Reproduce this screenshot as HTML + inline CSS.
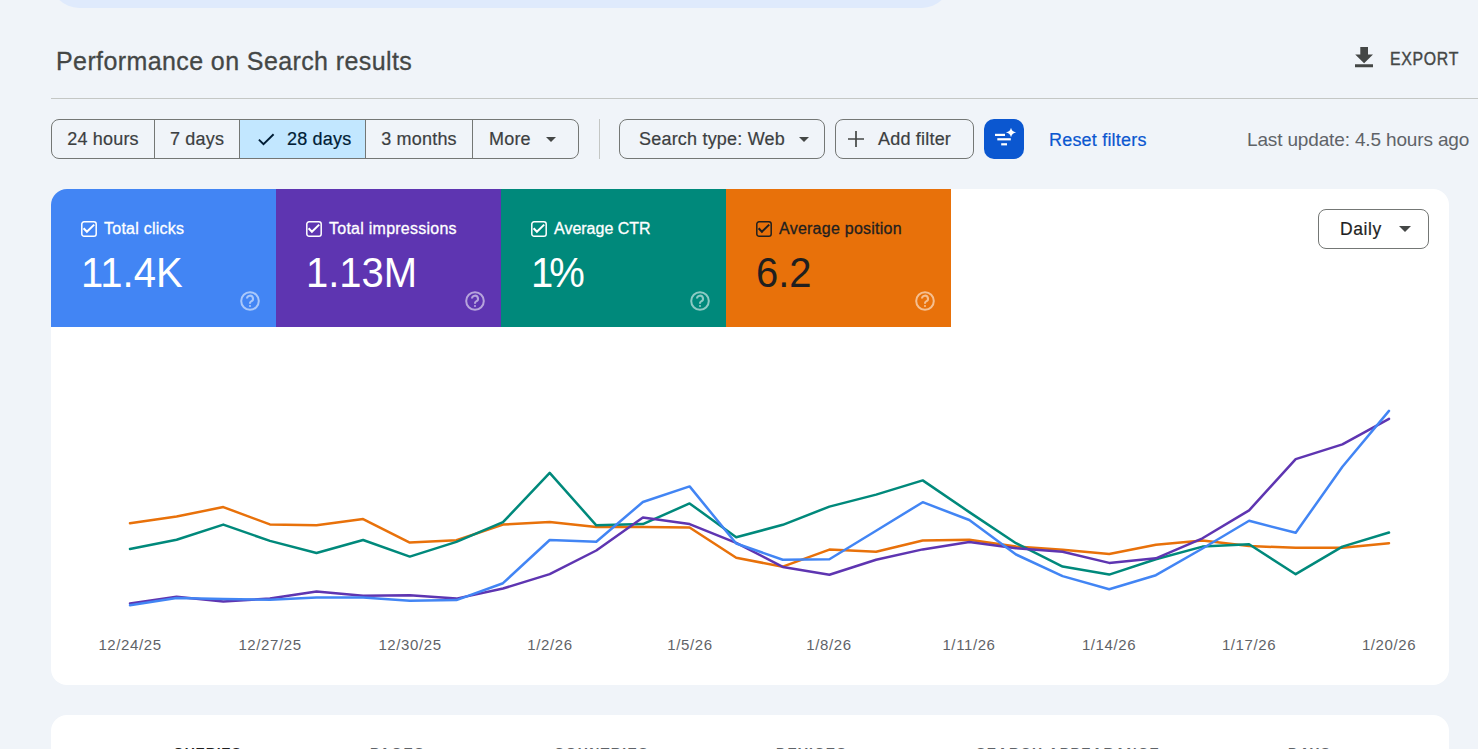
<!DOCTYPE html>
<html><head><meta charset="utf-8">
<style>
*{box-sizing:border-box;margin:0;padding:0}
html,body{width:1478px;height:749px;overflow:hidden;background:#f0f4f9;font-family:"Liberation Sans",sans-serif;color:#1f1f1f}
.abs{position:absolute}
#topbox{left:51px;top:-40px;width:899px;height:48px;background:#dfeafc;border-radius:0 0 28px 28px}
#title{left:56px;top:47px;font-size:25px;letter-spacing:0.4px;color:#444746;white-space:nowrap;-webkit-text-stroke:0.3px #444746}
#export{left:1355px;top:46px;height:24px}
#export span{position:absolute;left:35px;top:3px;font-size:18px;color:#444746;letter-spacing:0.8px;-webkit-text-stroke:0.4px #444746;transform:scaleX(0.88);transform-origin:0 0}
#hr{left:51px;top:98px;width:1427px;height:1px;background:#c4c7c5}
.seg{left:51px;top:119px;width:528px;height:40px;border:1px solid #747775;border-radius:8px;overflow:hidden}
.seg div{position:absolute;top:0;height:38px;border-left:1px solid #747775;font-size:18px;letter-spacing:0.2px;color:#3c3f41;-webkit-text-stroke:0.2px currentColor;line-height:38px;text-align:center}
.btn{position:absolute;top:119px;height:40px;border:1px solid #747775;border-radius:8px;font-size:18px;letter-spacing:0.2px;line-height:38px;color:#3c3f41;white-space:nowrap;-webkit-text-stroke:0.2px currentColor}
.caret{position:absolute;width:0;height:0;border-left:5px solid transparent;border-right:5px solid transparent;border-top:5px solid #444746}
#card{left:51px;top:189px;width:1398px;height:496px;background:#fff;border-radius:16px;overflow:hidden}
.m{position:absolute;top:0;width:225px;height:138px;color:#fff}
.m .lbl{position:absolute;left:53px;top:31px;font-size:16px;letter-spacing:0.25px;white-space:nowrap;-webkit-text-stroke:0.3px currentColor}
.m .cb{position:absolute;left:30px;top:32px;width:15px;height:15px;border:1.6px solid #fff;border-radius:2px}
.m .val{position:absolute;left:30px;top:62px;font-size:40px;white-space:nowrap;transform:scaleY(1.06);transform-origin:0 36px}
.m svg.h{position:absolute;left:188px;top:101px}
#daily{left:1318px;top:209px;width:111px;height:40px;border:1px solid #747775;border-radius:8px}
.ax{position:absolute;top:636px;font-size:15px;letter-spacing:0.6px;color:#5f6368;width:100px;text-align:center;margin-left:-50px}
#card2{left:51px;top:715px;width:1398px;height:100px;background:#fff;border-radius:16px}
.tab{position:absolute;top:745px;font-size:14px;font-weight:bold;color:#5f6368;white-space:nowrap;letter-spacing:1.4px}
</style></head><body>
<div id="topbox" class="abs"></div>
<div id="title" class="abs">Performance on Search results</div>
<div id="export" class="abs">
<svg width="18" height="22" style="position:absolute;left:0;top:0" viewBox="0 0 18 22"><path d="M5.3 1h7.7v7.5h5l-8.9 8.7L0.2 8.5h5.1z M0 18.3h18v2.9H0z" fill="#444746"/></svg>
<span>EXPORT</span></div>
<div id="hr" class="abs"></div>

<div class="seg abs">
 <div style="left:0;width:102px;border-left:none">24 hours</div>
 <div style="left:102px;width:85px">7 days</div>
 <div style="left:187px;width:126px;background:#c2e7ff;color:#001d35"><span style="position:absolute;left:47px;top:0">28 days</span></div>
 <div style="left:313px;width:107px">3 months</div>
 <div style="left:420px;width:108px;text-align:left;padding-left:16px">More</div>
</div>
<svg class="abs" style="left:256px;top:131px" width="20" height="16" viewBox="0 0 20 16"><path d="M2.9 8.6l4.6 4.6L17.6 3.2" fill="none" stroke="#001d35" stroke-width="1.9"/></svg>
<div class="caret" style="left:546px;top:137px"></div>
<div class="abs" style="left:599px;top:119px;width:1px;height:40px;background:#c4c7c5"></div>

<div class="btn" style="left:619px;width:206px;padding-left:19px">Search type: Web</div>
<div class="caret" style="left:799px;top:137px"></div>
<div class="btn" style="left:835px;width:139px;padding-left:42px">Add filter</div>
<svg class="abs" style="left:848px;top:131px" width="16" height="16" viewBox="0 0 16 16"><path d="M8 0v16M0 8h16" stroke="#444746" stroke-width="1.7"/></svg>
<div class="abs" style="left:984px;top:119px;width:40px;height:40px;background:#0b57d0;border-radius:10px"></div>
<svg class="abs" style="left:984px;top:119px" width="40" height="40" viewBox="0 0 40 40">
<rect x="11" y="14.8" width="10" height="2.2" fill="#fff"/>
<rect x="13.3" y="19.2" width="13.5" height="2.2" fill="#fff"/>
<rect x="17.2" y="24.2" width="5.8" height="2.2" fill="#fff"/>
<path d="M27 8.8 Q27.8 12.7 32.1 13.5 Q27.8 14.3 27 18.3 Q26.2 14.3 21.9 13.5 Q26.2 12.7 27 8.8z" fill="#fff"/>
</svg>
<div class="abs" style="left:1049px;top:130px;font-size:18px;letter-spacing:0.2px;color:#0b57d0;white-space:nowrap;-webkit-text-stroke:0.2px #0b57d0">Reset filters</div>
<div class="abs" style="left:1247px;top:129px;font-size:19px;letter-spacing:-0.15px;color:#5f6368;white-space:nowrap">Last update: 4.5 hours ago</div>

<div id="card" class="abs">
 <div class="m" style="left:0;background:#4285f4"><svg class="cb2" width="16" height="16" viewBox="0 0 16 16" style="position:absolute;left:30px;top:32px"><rect x="0.8" y="0.8" width="14.4" height="14.4" rx="2.3" fill="none" stroke="#fff" stroke-width="1.5"/><path d="M2.6 7.3l3.3 3.5L13.2 3.6" fill="none" stroke="#fff" stroke-width="2"/></svg><div class="lbl">Total clicks</div><div class="val">11.4K</div><svg class="h" width="22" height="22" viewBox="0 0 22 22"><circle cx="11" cy="11" r="8.8" fill="none" stroke="rgba(255,255,255,0.55)" stroke-width="2"/><path d="M8 8.6a3 3 0 1 1 4.2 2.8c-0.8 0.4-1.2 0.9-1.2 1.8v0.6" fill="none" stroke="rgba(255,255,255,0.55)" stroke-width="2.1"/><circle cx="11" cy="16" r="1.1" fill="rgba(255,255,255,0.55)"/></svg></div>
 <div class="m" style="left:225px;background:#5e35b1"><svg class="cb2" width="16" height="16" viewBox="0 0 16 16" style="position:absolute;left:30px;top:32px"><rect x="0.8" y="0.8" width="14.4" height="14.4" rx="2.3" fill="none" stroke="#fff" stroke-width="1.5"/><path d="M2.6 7.3l3.3 3.5L13.2 3.6" fill="none" stroke="#fff" stroke-width="2"/></svg><div class="lbl">Total impressions</div><div class="val">1.13M</div><svg class="h" width="22" height="22" viewBox="0 0 22 22"><circle cx="11" cy="11" r="8.8" fill="none" stroke="rgba(255,255,255,0.55)" stroke-width="2"/><path d="M8 8.6a3 3 0 1 1 4.2 2.8c-0.8 0.4-1.2 0.9-1.2 1.8v0.6" fill="none" stroke="rgba(255,255,255,0.55)" stroke-width="2.1"/><circle cx="11" cy="16" r="1.1" fill="rgba(255,255,255,0.55)"/></svg></div>
 <div class="m" style="left:450px;background:#00897b"><svg class="cb2" width="16" height="16" viewBox="0 0 16 16" style="position:absolute;left:30px;top:32px"><rect x="0.8" y="0.8" width="14.4" height="14.4" rx="2.3" fill="none" stroke="#fff" stroke-width="1.5"/><path d="M2.6 7.3l3.3 3.5L13.2 3.6" fill="none" stroke="#fff" stroke-width="2"/></svg><div class="lbl" style="letter-spacing:0">Average CTR</div><div class="val" style="letter-spacing:-4px">1%</div><svg class="h" width="22" height="22" viewBox="0 0 22 22"><circle cx="11" cy="11" r="8.8" fill="none" stroke="rgba(255,255,255,0.55)" stroke-width="2"/><path d="M8 8.6a3 3 0 1 1 4.2 2.8c-0.8 0.4-1.2 0.9-1.2 1.8v0.6" fill="none" stroke="rgba(255,255,255,0.55)" stroke-width="2.1"/><circle cx="11" cy="16" r="1.1" fill="rgba(255,255,255,0.55)"/></svg></div>
 <div class="m" style="left:675px;background:#e8710a;color:#1f1f1f"><svg class="cb2" width="16" height="16" viewBox="0 0 16 16" style="position:absolute;left:30px;top:32px"><rect x="0.8" y="0.8" width="14.4" height="14.4" rx="2.3" fill="none" stroke="#1f1f1f" stroke-width="1.5"/><path d="M2.6 7.3l3.3 3.5L13.2 3.6" fill="none" stroke="#1f1f1f" stroke-width="2"/></svg><div class="lbl">Average position</div><div class="val">6.2</div><svg class="h" width="22" height="22" viewBox="0 0 22 22"><circle cx="11" cy="11" r="8.8" fill="none" stroke="rgba(255,255,255,0.55)" stroke-width="2"/><path d="M8 8.6a3 3 0 1 1 4.2 2.8c-0.8 0.4-1.2 0.9-1.2 1.8v0.6" fill="none" stroke="rgba(255,255,255,0.55)" stroke-width="2.1"/><circle cx="11" cy="16" r="1.1" fill="rgba(255,255,255,0.55)"/></svg></div>
</div>
<div id="daily" class="abs"><span style="position:absolute;left:21px;top:9px;font-size:17.5px;letter-spacing:0.6px;color:#1f1f1f;-webkit-text-stroke:0.2px #1f1f1f">Daily</span><div class="caret" style="left:80px;top:16px;border-left-width:6px;border-right-width:6px;border-top-width:6px"></div></div>

<svg class="abs" style="left:0;top:0" width="1478" height="749">
<g fill="none" stroke-width="2.5" stroke-linejoin="round" stroke-linecap="round">
<polyline stroke="#e8710a" points="130.0,523.2 176.6,516.4 223.3,507.1 269.9,524.4 316.5,525.3 363.1,519.1 409.8,542.6 456.4,540.2 503.0,524.6 549.7,522.0 596.3,527.0 642.9,527.0 689.6,527.5 736.2,557.8 782.8,566.7 829.4,549.6 876.1,551.8 922.7,540.5 969.3,539.7 1016.0,546.5 1062.6,549.7 1109.2,554.0 1155.9,544.8 1202.5,540.5 1249.1,546.0 1295.7,547.8 1342.4,547.8 1389.0,543.2"/>
<polyline stroke="#00897b" points="130.0,548.9 176.6,539.7 223.3,524.6 269.9,540.9 316.5,553.0 363.1,540.0 409.8,556.6 456.4,541.9 503.0,522.2 549.7,472.9 596.3,525.3 642.9,524.1 689.6,503.4 736.2,537.3 782.8,524.8 829.4,506.6 876.1,494.6 922.7,480.4 969.3,512.1 1016.0,543.2 1062.6,566.6 1109.2,574.6 1155.9,559.2 1202.5,546.6 1249.1,544.2 1295.7,574.2 1342.4,546.6 1389.0,532.5"/>
<polyline stroke="#5e35b1" points="130.0,603.4 176.6,596.7 223.3,601.5 269.9,598.6 316.5,591.6 363.1,595.7 409.8,595.3 456.4,598.6 503.0,588.5 549.7,574.1 596.3,550.5 642.9,517.4 689.6,524.1 736.2,542.9 782.8,566.9 829.4,574.8 876.1,559.7 922.7,549.4 969.3,542.1 1016.0,548.2 1062.6,551.8 1109.2,562.9 1155.9,558.3 1202.5,538.3 1249.1,510.4 1295.7,459.1 1342.4,444.4 1389.0,418.9"/>
<polyline stroke="#4285f4" points="130.0,605.3 176.6,597.9 223.3,599.1 269.9,599.8 316.5,597.4 363.1,597.4 409.8,600.8 456.4,600.1 503.0,583.2 549.7,540.0 596.3,541.7 642.9,502.0 689.6,486.4 736.2,543.5 782.8,559.7 829.4,559.2 876.1,530.8 922.7,502.2 969.3,520.0 1016.0,554.5 1062.6,576.1 1109.2,589.3 1155.9,575.2 1202.5,548.5 1249.1,520.8 1295.7,532.8 1342.4,466.8 1389.0,410.9"/>
</g>
</svg>
<div class="ax" style="left:130px">12/24/25</div>
<div class="ax" style="left:270px">12/27/25</div>
<div class="ax" style="left:410px">12/30/25</div>
<div class="ax" style="left:550px">1/2/26</div>
<div class="ax" style="left:690px">1/5/26</div>
<div class="ax" style="left:829px">1/8/26</div>
<div class="ax" style="left:969px">1/11/26</div>
<div class="ax" style="left:1109px">1/14/26</div>
<div class="ax" style="left:1249px">1/17/26</div>
<div class="ax" style="left:1389px">1/20/26</div>

<div id="card2" class="abs"></div>
<div class="tab" style="left:173px;color:#1f1f1f;letter-spacing:0.8px">QUERIES</div>
<div class="tab" style="left:370px">PAGES</div>
<div class="tab" style="left:554px">COUNTRIES</div>
<div class="tab" style="left:776px">DEVICES</div>
<div class="tab" style="left:976px">SEARCH APPEARANCE</div>
<div class="tab" style="left:1288px">DAYS</div>
</body></html>
